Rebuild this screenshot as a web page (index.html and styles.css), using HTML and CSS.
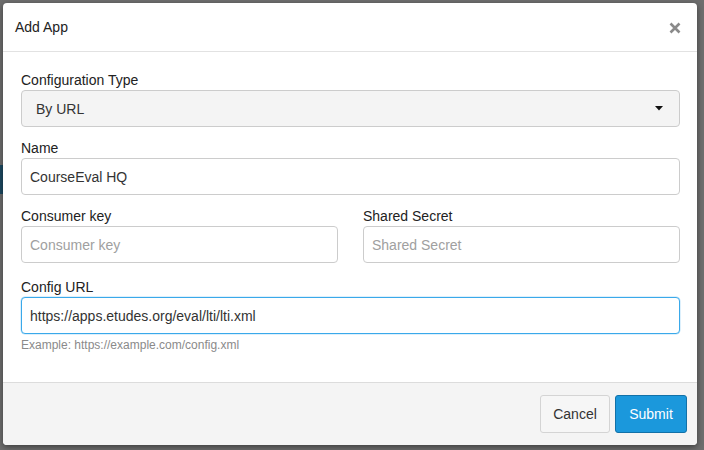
FILE: index.html
```html
<!DOCTYPE html>
<html lang="en">
<head>
<meta charset="utf-8">
<title>Add App</title>
<link rel="stylesheet" href="styles.css">
</head>
<body>
<div class="modal">
  <div class="modal-header">
    <h1 class="modal-title">Add App</h1>
    <button class="close" type="button" aria-label="Close">
      <svg width="12" height="12" viewBox="0 0 12 12"><path d="M1.5 1.5 L10.5 10.5 M10.5 1.5 L1.5 10.5" stroke="#8a8a8a" stroke-width="2.6" stroke-linecap="butt"/></svg>
    </button>
  </div>
  <div class="modal-body">
    <div class="form-group">
      <label class="label">Configuration Type</label>
      <div class="select">
        <span>By URL</span>
        <svg class="caret" width="8" height="5" viewBox="0 0 8 5"><path d="M0 0 H8 L4 4.5 Z" fill="#111"/></svg>
      </div>
    </div>
    <div class="form-group">
      <label class="label">Name</label>
      <input class="form-control" type="text" value="CourseEval HQ">
    </div>
    <div class="form-row">
      <div>
        <label class="label">Consumer key</label>
        <input class="form-control" type="text" placeholder="Consumer key">
      </div>
      <div>
        <label class="label">Shared Secret</label>
        <input class="form-control" type="text" placeholder="Shared Secret">
      </div>
    </div>
    <div class="form-group last">
      <label class="label">Config URL</label>
      <input class="form-control focused" type="text" value="https://apps.etudes.org/eval/lti/lti.xml">
      <p class="help">Example: https://example.com/config.xml</p>
    </div>
  </div>
  <div class="modal-footer">
    <button class="btn btn-default" type="button">Cancel</button>
    <button class="btn btn-primary" type="button">Submit</button>
  </div>
</div>
</body>
</html>
```
FILE: styles.css
```css
* { box-sizing: border-box; }
html, body { height: 100%; }
body {
  margin: 0;
  padding: 3px 7px 0 3px;
  font-family: "Liberation Sans", Arial, Helvetica, sans-serif;
  font-size: 14px;
  color: #333;
  background:
    linear-gradient(#1d4a62, #1d4a62) 0 165px / 3px 29px no-repeat,
    #6e6e6e;
  overflow: hidden;
}
.modal {
  width: 694px;
  background: #fff;
  border-radius: 4px;
  box-shadow: 0 2px 6px rgba(0,0,0,0.45);
  overflow: hidden;
}
.modal-header {
  height: 49px;
  padding: 0 16px 0 12px;
  display: flex;
  align-items: center;
  justify-content: space-between;
  border-bottom: 1px solid #e2e2e2;
}
.modal-title {
  margin: 0;
  font-size: 14px;
  font-weight: normal;
  color: #222;
  line-height: 20px;
}
.close {
  border: 0;
  background: none;
  padding: 0;
  width: 12px;
  height: 12px;
  display: flex;
  margin-top: 1px;
}
.modal-body {
  padding: 18px 17px 28px 18px;
}
.form-group { margin-bottom: 11px; }
.form-group.last { margin-bottom: 0; }
.label {
  display: block;
  line-height: 20px;
  font-size: 14px;
  color: #222;
}
.select {
  height: 37px;
  background: #f4f4f4;
  border: 1px solid #ccc;
  border-radius: 4px;
  padding: 0 16px 0 14px;
  display: flex;
  align-items: center;
  justify-content: space-between;
  color: #333;
}
.caret { display: block; }
.form-control {
  display: block;
  width: 100%;
  height: 37px;
  border: 1px solid #ccc;
  border-radius: 4px;
  padding: 0 8px;
  font-family: inherit;
  font-size: 14px;
  color: #333;
  background: #fff;
  outline: none;
  margin: 0;
}
.form-control::placeholder { color: #a0a0a0; opacity: 1; }
.form-control.focused { border: 1px solid #3aa9ea; box-shadow: 0 0 0 0.5px rgba(58,169,234,0.35); }
.form-row {
  display: grid;
  grid-template-columns: 1fr 1fr;
  column-gap: 25px;
  margin-bottom: 14px;
}
.help {
  margin: 3px 0 0;
  font-size: 12px;
  line-height: 17px;
  color: #8a8a8a;
}
.modal-footer {
  border-top: 1px solid #dcdcdc;
  background: #f4f4f4;
  padding: 12px 10px 12px;
  display: flex;
  justify-content: flex-end;
  gap: 5px;
}
.btn {
  height: 38px;
  border-radius: 3px;
  font-family: inherit;
  font-size: 14px;
  padding: 0 12px;
  margin: 0;
}
.btn-default {
  width: 70px;
  background: #f6f6f6;
  border: 1px solid #d4d4d4;
  color: #333;
}
.btn-primary {
  width: 72px;
  background: #1b98dc;
  border: 1px solid #1271a8;
  color: #fff;
}
```
